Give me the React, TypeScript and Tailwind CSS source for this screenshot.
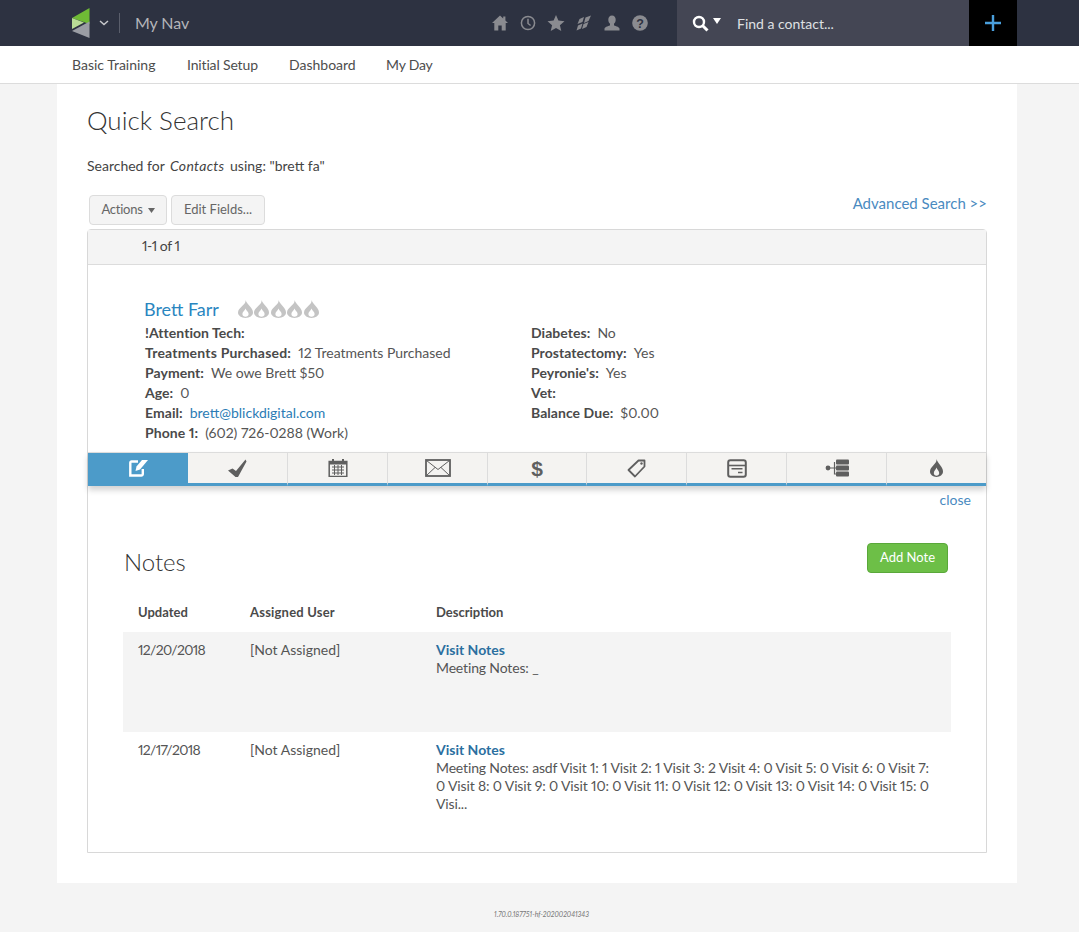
import React from "react";

const F = "font-['Lato','Open_Sans',sans-serif] proportional-nums";

function Logo() {
  return (
    <svg width="20" height="32" viewBox="0 0 20 32" className="block">
      <polygon points="18.5,1 18.5,17 1,11" fill="#6fbb35" />
      <polygon points="1,11 13,15.5 1,22" fill="#b9dc96" />
      <polygon points="18.5,14.5 18.5,31 1,24" fill="#9a9da4" />
    </svg>
  );
}

const Flame = ({ w = 15, h = 18, color = "#c4c4c4", inner = "#fff" }: { w?: number; h?: number; color?: string; inner?: string }) => (
  <svg width={w} height={h} viewBox="2 0 12 18" preserveAspectRatio="none" className="block">
    <path d="M8 0C8.600 3 11 5 12.600 8 13.500 9.600 14 11 14 12.600 14 15.800 11.200 18 8 18S2 15.800 2 12.600C2 10 3.500 8.500 4.800 6.800 6.300 4.800 8.400 3 8 0z" fill={color} />
    <path d="M8 8.500C8.500 10.700 10.500 11.800 10.500 14 10.500 15.700 9.300 16.700 8 16.700S5.500 15.700 5.500 14C5.500 11.800 7.500 10.700 8 8.500z" fill={inner} />
  </svg>
);

const HIcon = ({ children, w = 18 }: { children: React.ReactNode; w?: number }) => (
  <svg width={w} height={18} viewBox="0 0 18 18" fill="#8a8b90" className="block">{children}</svg>
);

function TopIcons() {
  return (
    <div className="flex items-center gap-[10px]">
      <HIcon><path d="M9 1.500 1 9h2.300v7.500h4v-5h3.400v5h4V9H17l-2.600-2.400V2.500h-2.200v2z" /></HIcon>
      <HIcon>
        <circle cx="9" cy="9" r="6.600" fill="none" stroke="#8a8b90" strokeWidth="1.500" />
        <path d="M9 4.800V9.500l2.600 2" fill="none" stroke="#8a8b90" strokeWidth="1.500" />
      </HIcon>
      <HIcon><polygon points="9,1 11.400,6.600 17.500,7.200 12.900,11.200 14.300,17 9,14 3.700,17 5.100,11.200 0.500,7.200 6.600,6.600" /></HIcon>
      <HIcon>
        <path d="M4.500 5 9 3 7.500 8 2.500 10zM10.500 3.500 16 1.500 13.500 7 9 9zM3 11.500 7.500 9.500 6 14.500 1.500 16.500zM8.500 10 13.500 8 11.500 13 7 15z" />
      </HIcon>
      <HIcon><path d="M9 1.500c2.300 0 3.700 1.800 3.700 4.200 0 1.800-.8 3.300-1.700 4.100v1.400c0 .6 5.500 1.300 5.500 3.600v1.700h-15v-1.700c0-2.300 5.500-3 5.500-3.600V9.800C6.100 9 5.300 7.500 5.300 5.700 5.300 3.300 6.700 1.500 9 1.500z" /></HIcon>
      <HIcon>
        <circle cx="9" cy="9" r="7.800" />
        <text x="9" y="13.500" textAnchor="middle" fontSize="12.500" fontWeight="900" fill="#2d3241" fontFamily="Liberation Sans">?</text>
      </HIcon>
    </div>
  );
}

const tabIcon = "#5f5f5f";
const tabs: React.ReactNode[] = [
  <svg width="19" height="18" viewBox="0 0 19 18" key="0" className="block">
    <path d="M9 2.500H2.500a1.200 1.200 0 0 0-1.200 1.200V16.500h11a1.500 1.500 0 0 0 1.500-1.500V10" fill="none" stroke="#fff" strokeWidth="2.400" />
    <path d="M13 1h6L11 10.500 6.500 12 7.500 7.500z" fill="#fff" />
  </svg>,
  <svg width="19" height="18" viewBox="0 0 19 18" key="1" className="block">
    <path d="M0 11.500 4.500 9.500 8 12 17.500 0.500 18.500 2.500 10 18H7.500z" fill={tabIcon} />
  </svg>,
  <svg width="20" height="18" viewBox="0 0 20 18" key="2" className="block">
    <rect x="1.200" y="2.500" width="17.600" height="15" fill="none" stroke={tabIcon} strokeWidth="1.500" />
    <rect x="1" y="2" width="18" height="3.500" fill={tabIcon} />
    <rect x="4" y="0" width="2" height="3" fill={tabIcon} />
    <rect x="14" y="0" width="2" height="3" fill={tabIcon} />
    <path d="M4 8h12M4 11h12M4 14h12M6.500 6v10M10 6v10M13.500 6v10" stroke={tabIcon} strokeWidth="1" fill="none" />
  </svg>,
  <svg width="26" height="18" viewBox="0 0 26 18" key="3" className="block">
    <rect x="1" y="1" width="24" height="16" fill="none" stroke={tabIcon} strokeWidth="1.800" />
    <path d="M1.500 1.500 13 10.500 24.500 1.500M1.500 16.500 10 8.500M24.500 16.500 16 8.500" fill="none" stroke={tabIcon} strokeWidth="1" />
  </svg>,
  <span key="4" className="font-['Liberation_Sans',sans-serif] text-[21px] font-bold leading-none text-[#5f5f5f]">$</span>,
  <svg width="19" height="19" viewBox="0 0 19 19" key="5" className="block">
    <path d="M11.500 1.500h6v6L8 17.500 1.500 11z" fill="none" stroke={tabIcon} strokeWidth="1.800" strokeLinejoin="round" />
    <circle cx="14.500" cy="4.500" r="1.200" fill={tabIcon} />
  </svg>,
  <svg width="20" height="19" viewBox="0 0 20 19" key="6" className="block">
    <rect x="1.200" y="1.200" width="17.600" height="16.600" rx="2.200" fill="none" stroke={tabIcon} strokeWidth="2" />
    <path d="M1.500 6.500h17" stroke={tabIcon} strokeWidth="1.600" />
    <path d="M4.500 9.800h11M11 13.500h4.500" stroke={tabIcon} strokeWidth="1.600" />
  </svg>,
  <svg width="24" height="18" viewBox="0 0 24 18" key="7" className="block">
    <circle cx="3" cy="9" r="2.400" fill={tabIcon} />
    <path d="M4 9h8M9.500 3v12h3" stroke={tabIcon} strokeWidth="1.200" fill="none" />
    <rect x="11" y="0.500" width="13" height="5" rx="1" fill={tabIcon} />
    <rect x="11" y="6.500" width="13" height="5" rx="1" fill={tabIcon} />
    <rect x="11" y="12.500" width="13" height="5" rx="1" fill={tabIcon} />
  </svg>,
  <Flame key="8" w={13} h={18} color="#5f5f5f" inner="#f4f3f1" />,
];

const Field = ({ label, value, wide }: { label: string; value?: React.ReactNode; wide?: boolean }) => (
  <div className="h-5 whitespace-nowrap leading-5">
    <span className={`font-bold text-[#4a4a4a] ${wide ? "tracking-[0.2px]" : "tracking-[0.05px]"}`}>{label}</span>
    {value !== undefined && <span className="ml-[7px] text-[#555]">{value}</span>}
  </div>
);

const Note = ({ date, desc, shaded, h }: { date: string; desc: string; shaded?: boolean; h: string }) => (
  <div className={`flex pt-[9px] leading-[18px] text-[#555] ${h} ${shaded ? "bg-[#f4f4f4]" : ""}`}>
    <div className="ml-[15px] w-[112px] tracking-[-0.7px]">{date}</div>
    <div className="w-[186px]">[Not Assigned]</div>
    <div className="w-[500px]">
      <div className="font-bold text-[#2b6f9f]">Visit Notes</div>
      <div className="tracking-[-0.15px]">{desc}</div>
    </div>
  </div>
);

export default function App() {
  return (
    <div className={`${F} flex min-h-[932px] flex-col bg-[#f4f4f4] text-[14px] text-[#444]`}>
      <header className="flex h-[46px] items-center bg-[#2d3241]">
        <div className="ml-[71px]"><Logo /></div>
        <svg width="10" height="6" viewBox="0 0 10 6" className="ml-[8px]"><path d="M1 1l4 3.500L9 1" fill="none" stroke="#c8c9cc" strokeWidth="1.500" /></svg>
        <div className="ml-[10px] h-[20px] w-px bg-[#5a5e6b]" />
        <div className="ml-[15px] w-[356px] text-[16px] tracking-[-0.1px] text-[#b4b5b9]">My Nav</div>
        <TopIcons />
        <div className="ml-[28px] flex h-full w-[292px] items-center bg-[#444654] pl-[15px] text-[#dfe0e3]">
          <svg width="17" height="17" viewBox="0 0 17 17"><circle cx="7" cy="7" r="5" fill="none" stroke="#fff" strokeWidth="2.400" /><path d="M10.500 10.500 15.500 15.500" stroke="#fff" strokeWidth="3" /></svg>
          <svg width="8" height="6" viewBox="0 0 8 6" className="ml-[4px] mb-[4px]"><polygon points="0,0 8,0 4,6" fill="#fff" /></svg>
          <span className="ml-[16px]">Find a contact...</span>
        </div>
        <div className="flex h-full w-[48px] items-center justify-center bg-black">
          <svg width="16" height="16" viewBox="0 0 16 16"><path d="M8 0v16M0 8h16" stroke="#4a9fdc" strokeWidth="2.400" /></svg>
        </div>
      </header>

      <nav className="flex h-[38px] items-center gap-[30px] whitespace-nowrap border-b border-[#dcdcdc] bg-white pb-px pl-[72px] text-[#4d4d4d]">
        <span className="w-[85px]">Basic Training</span>
        <span className="w-[72px] tracking-[-0.15px]">Initial Setup</span>
        <span className="w-[67px]">Dashboard</span>
        <span className="tracking-[-0.2px]">My Day</span>
      </nav>

      <main className="mx-[57px] h-[799px] w-[960px] bg-white px-[30px]">
        <h1 className="pt-[21px] text-[26px] font-light leading-[30px] text-[#333]">Quick Search</h1>
        <p className="mt-[22px] leading-[18px] text-[#444]">Searched for <em className="mx-[2px] tracking-[0.3px]">Contacts</em> using: "brett fa"</p>

        <div className="mt-[20px] flex items-start justify-between pl-[2px]">
          <div className="flex gap-[4px] text-[13px] text-[#666]">
            <div className="flex h-[30px] w-[78px] items-center justify-center gap-[5px] rounded-[4px] border border-[#dcdcdc] bg-[#f4f4f4]">
              <span className="tracking-[-0.25px]">Actions</span>
              <svg width="7" height="5" viewBox="0 0 7 5"><polygon points="0,0 7,0 3.500,5" fill="#666" /></svg>
            </div>
            <div className="flex h-[30px] w-[94px] items-center justify-center rounded-[4px] border border-[#dcdcdc] bg-[#f4f4f4]">Edit Fields...</div>
          </div>
          <a className="-mt-px text-[15px] leading-[18px] text-[#4a8abf]">Advanced Search &gt;&gt;</a>
        </div>

        <section className="mt-[4px] h-[624px] rounded-t-[4px] border border-[#d8d8d8]">
          <div className="flex h-[35px] items-center border-b border-[#dcdcdc] bg-[#f4f4f4] pb-[3px] pl-[54px] tracking-[-0.5px] text-[#444]">1-1 of 1</div>

          <div className="h-[187px] pl-[57px]">
            <div className="mb-px flex items-center pt-[31px]">
              <a className="-ml-px text-[18px] leading-[26px] text-[#2a86bf]">Brett Farr</a>
              <div className="ml-[19px] flex gap-[1.5px]">
                {[0, 1, 2, 3, 4].map((i) => <Flame key={i} />)}
              </div>
            </div>
            <div className="-mt-px flex pt-px">
              <div className="w-[386px]">
                <Field label="!Attention Tech:" />
                <Field label="Treatments Purchased:" wide value="12 Treatments Purchased" />
                <Field label="Payment:" value="We owe Brett $50" />
                <Field label="Age:" value="0" />
                <Field label="Email:" value={<span className="text-[#2b7cb5]">brett@blickdigital.com</span>} />
                <Field label="Phone 1:" value="(602) 726-0288 (Work)" />
              </div>
              <div>
                <Field label="Diabetes:" value="No" />
                <Field label="Prostatectomy:" value="Yes" />
                <Field label="Peyronie's:" value="Yes" />
                <Field label="Vet:" />
                <Field label="Balance Due:" value="$0.00" />
              </div>
            </div>
          </div>

          <div className="grid h-[34px] grid-cols-[100px_100px_100px_100px_99px_100px_100px_100px_1fr] border-t border-[#dcdcdc] bg-[#f4f3f1] shadow-[0_4px_6px_rgba(0,0,0,0.18)]">
            {tabs.map((t, i) => (
              <div key={i} className={`flex items-center justify-center border-b-[3px] border-b-[#4c9bc9] ${i === 0 ? "bg-[#4c9bc9]" : ""} ${i > 0 && i < 8 ? "border-r border-r-[#dcdcdc]" : ""}`}>
                {t}
              </div>
            ))}
          </div>
          <div className="pr-[15px] pt-[5px] text-right leading-[18px] text-[#4a8abf]">close</div>

          <div className="flex items-start justify-between pl-[36px] pr-[38px] pt-[34px]">
            <h2 className="pt-[4px] text-[24px] font-light leading-[30px] text-[#333]">Notes</h2>
            <button className="h-[30px] w-[81px] rounded-[4px] border border-[#5aa83a] bg-[#6dbf47] text-[13px] text-white">Add Note</button>
          </div>

          <div className="mx-[35px] mt-[16px]">
            <div className="flex h-[39px] items-center text-[13px] font-bold text-[#4a4a4a]">
              <div className="ml-[15px] w-[112px]">Updated</div>
              <div className="w-[186px] tracking-[0.2px]">Assigned User</div>
              <div>Description</div>
            </div>
            <Note date="12/20/2018" desc="Meeting Notes: _" shaded h="h-[100px]" />
            <Note date="12/17/2018" h="h-[100px]" desc="Meeting Notes: asdf Visit 1: 1 Visit 2: 1 Visit 3: 2 Visit 4: 0 Visit 5: 0 Visit 6: 0 Visit 7: 0 Visit 8: 0 Visit 9: 0 Visit 10: 0 Visit 11: 0 Visit 12: 0 Visit 13: 0 Visit 14: 0 Visit 15: 0 Visi..." />
          </div>
        </section>
      </main>

      <footer className="pl-[4px] pt-[26px] text-center text-[7px] italic leading-[10px] text-[#777]">1.70.0.187751-hf-202002041343</footer>
    </div>
  );
}
